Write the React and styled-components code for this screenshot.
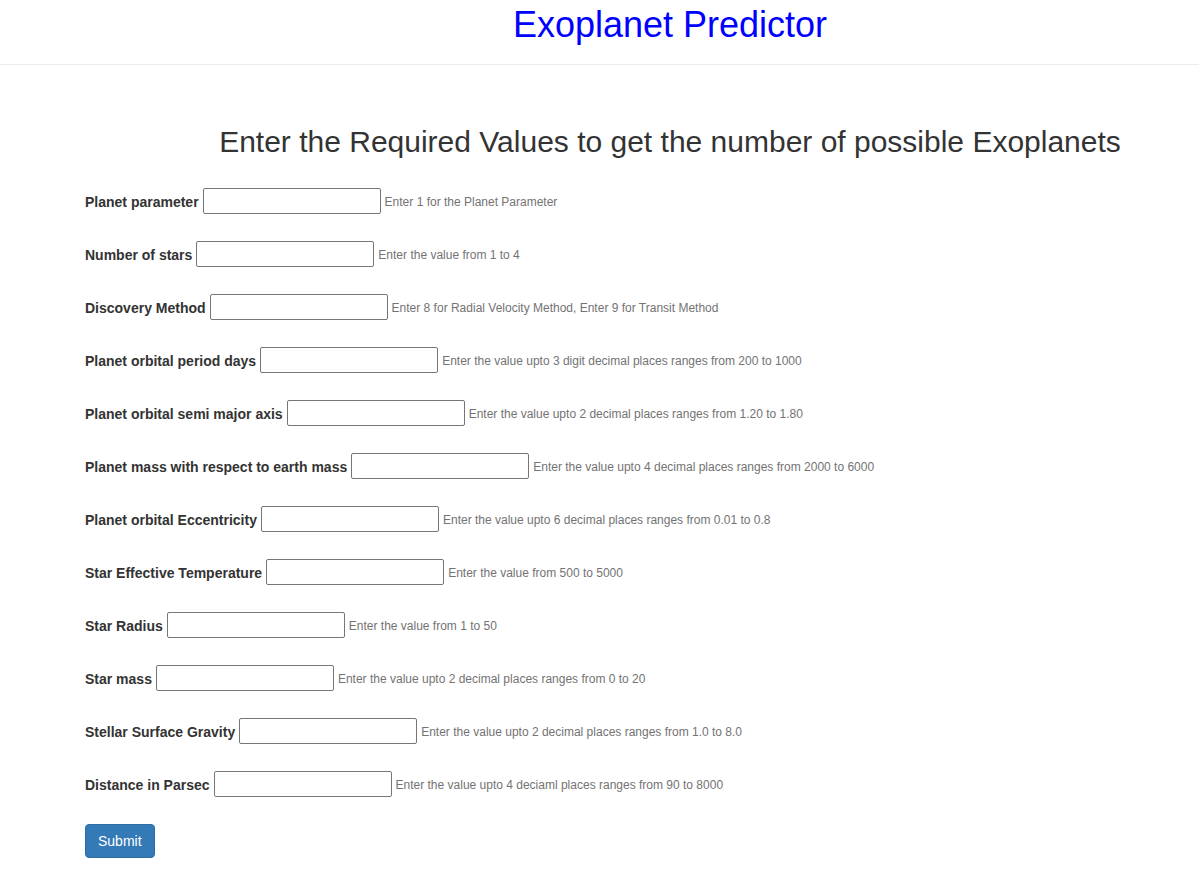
import React from 'react';
import styled, { createGlobalStyle } from 'styled-components';

const GlobalStyle = createGlobalStyle`
	body {
		margin: 0;
		background: #fff;
		font-family: "Liberation Sans", Arial, Helvetica, sans-serif;
		font-size: 14px;
		color: #333;
	}
`

const Navbar = styled.header`
	height: 64px;
	border-bottom: 1px solid #ececec;
	padding-left: 141px;
	text-align: center;
`

const Brand = styled.h1`
	margin: 0;
	padding-top: 4px;
	font-size: 36px;
	line-height: 41px;
	font-weight: normal;
	color: #0000ff;
`

const Heading = styled.h2`
	margin: 60px 0 30px 0;
	padding-left: 141px;
	text-align: center;
	font-size: 30px;
	line-height: 33px;
	font-weight: normal;
	color: #333;
`

const Form = styled.form`
	display: flex;
	flex-direction: column;
	align-items: flex-start;
	gap: 27px;
	padding-left: 85px;
`

const Row = styled.div`
	display: flex;
	align-items: center;
	gap: 4px;
	height: 26px;
`

const Label = styled.label`
	padding-top: 2px;
	font-weight: bold;
	font-size: 14px;
	color: #333;
	white-space: nowrap;
`

const Input = styled.input`
	box-sizing: border-box;
	width: 178px;
	height: 26px;
	border: 1px solid #767676;
	border-radius: 2px;
	padding: 1px 4px;
	font-family: inherit;
	font-size: 14px;
`

const Help = styled.span`
	padding-top: 2px;
	font-size: 12px;
	color: #737373;
	white-space: nowrap;
`

const SubmitButton = styled.button`
	box-sizing: border-box;
	height: 34px;
	padding: 6px 12px;
	font-family: inherit;
	font-size: 14px;
	line-height: 20px;
	color: #fff;
	background-color: #337ab7;
	border: 1px solid #2e6da4;
	border-radius: 4px;
	cursor: pointer;
`

const fields = [
	['Planet parameter', 'Enter 1 for the Planet Parameter'],
	['Number of stars', 'Enter the value from 1 to 4'],
	['Discovery Method', 'Enter 8 for Radial Velocity Method, Enter 9 for Transit Method'],
	['Planet orbital period days', 'Enter the value upto 3 digit decimal places ranges from 200 to 1000'],
	['Planet orbital semi major axis', 'Enter the value upto 2 decimal places ranges from 1.20 to 1.80'],
	['Planet mass with respect to earth mass', 'Enter the value upto 4 decimal places ranges from 2000 to 6000'],
	['Planet orbital Eccentricity', 'Enter the value upto 6 decimal places ranges from 0.01 to 0.8'],
	['Star Effective Temperature', 'Enter the value from 500 to 5000'],
	['Star Radius', 'Enter the value from 1 to 50'],
	['Star mass', 'Enter the value upto 2 decimal places ranges from 0 to 20'],
	['Stellar Surface Gravity', 'Enter the value upto 2 decimal places ranges from 1.0 to 8.0'],
	['Distance in Parsec', 'Enter the value upto 4 deciaml places ranges from 90 to 8000'],
];

export default function App() {
	return (
		<>
			<GlobalStyle />
			<Navbar>
				<Brand>Exoplanet Predictor</Brand>
			</Navbar>
			<Heading>Enter the Required Values to get the number of possible Exoplanets</Heading>
			<Form onSubmit={(e) => e.preventDefault()}>
				{fields.map(([label, help], i) => (
					<Row key={label}>
						<Label htmlFor={'f' + i}>{label}</Label>
						<Input id={'f' + i} type="text" />
						<Help>{help}</Help>
					</Row>
				))}
				<SubmitButton type="submit">Submit</SubmitButton>
			</Form>
		</>
	);
}
